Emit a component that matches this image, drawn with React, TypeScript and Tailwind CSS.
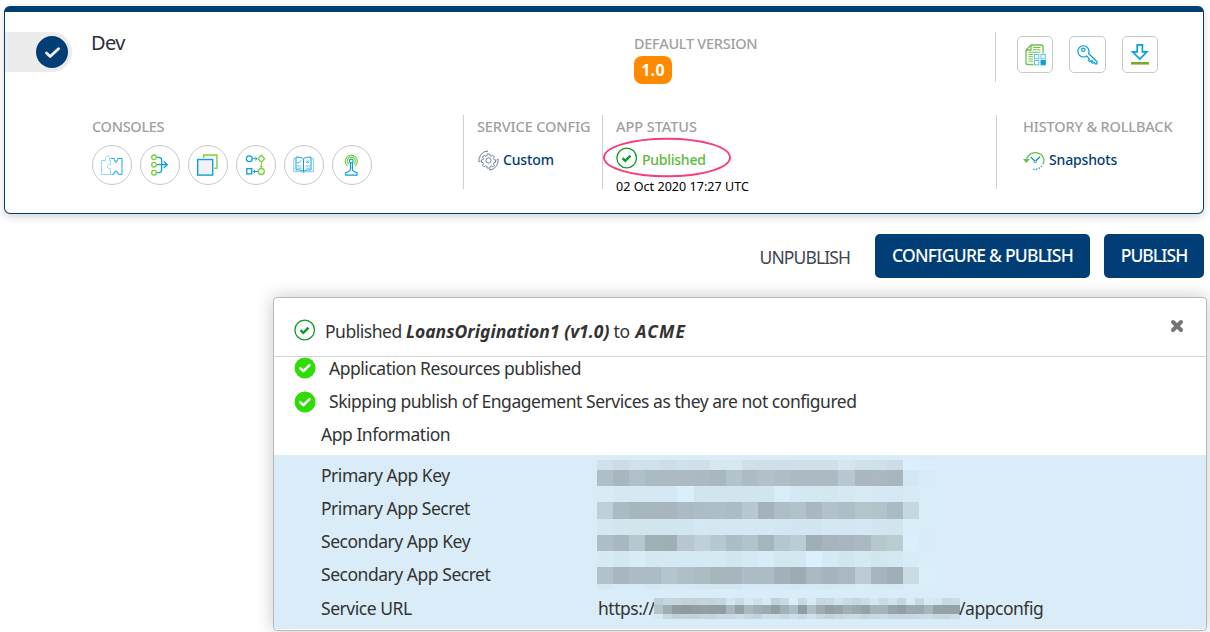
import type { ReactNode } from "react";

const BLUE = "#0aa0dc";
const GREEN = "#7ad03a";

/* ---------- icons ---------- */

function PuzzleIcon() {
  return (
    <svg className="block size-full" viewBox="0 0 40 40" fill="none" strokeWidth="1">
      <path stroke="#93d8f8" d="M9.500 15.500H13.500V13.500c0-3.400 4-3.400 4 0V15.500H18.500V19.500c-4-1-4 5 0 4V29.500H9.500Z" />
      <path stroke="#1ea8e0" d="M18.500 13.500H22.300c-.6 3.800 4 3.800 3.400 0H30V29.300H26.200c.4-3.800-4.800-3.800-4.400 0H19.500" />
      <circle cx="24" cy="16.500" r="1.200" stroke="#5cc0ea" strokeWidth=".7" />
      <circle cx="24" cy="27" r="1.200" stroke="#5cc0ea" strokeWidth=".7" />
    </svg>
  );
}

function MergeIcon() {
  return (
    <svg className="block size-full" viewBox="0 0 40 40" fill="none" strokeWidth="1.3">
      <g stroke={GREEN}>
        <circle cx="14" cy="12.300" r="2.300" />
        <circle cx="14" cy="19.700" r="2.300" />
        <circle cx="14" cy="27.700" r="2.300" />
      </g>
      <path stroke={BLUE} d="M17 12.300h1.500c2.500 0 3.200 1 3.200 3V24.500c0 2-.9 3.200-3.200 3.200H17M17 19.700H27.500M23.800 16.600l3.500 3.100-3.500 3.100" />
    </svg>
  );
}

function LayersIcon() {
  return (
    <svg className="block size-full" viewBox="0 0 40 40" fill="none" strokeWidth="1.400">
      <path stroke={GREEN} d="M15.800 13V10H28.900V23.300H26.200" />
      <rect x="9.700" y="14.500" width="15" height="15.600" fill="#f3f3f3" stroke={BLUE} />
    </svg>
  );
}

function WorkflowIcon() {
  return (
    <svg className="block size-full" viewBox="0 0 40 40" fill="none" strokeWidth="1.300">
      <g stroke={BLUE}>
        <circle cx="13.300" cy="13.700" r="2.900" />
        <rect x="10.800" y="23.700" width="5" height="5.200" />
        <path strokeWidth="1" d="M16.500 13.700h4.500M19.300 12.200l1.700 1.500-1.700 1.500M22 26.500h-4.800M19 25l-1.700 1.500L19 28" />
      </g>
      <g stroke={GREEN}>
        <path d="m25.300 10.300 3.300 3.400-3.300 3.400-3.300-3.400Z" />
        <circle cx="25.300" cy="26.500" r="3" />
        <path strokeWidth="1" d="M25.300 17.500v5M23.800 21l1.500 1.600 1.500-1.600" />
      </g>
    </svg>
  );
}

function BookIcon() {
  return (
    <svg className="block size-full" viewBox="0 0 40 40" fill="none" stroke={BLUE} strokeWidth="1">
      <path d="M19.500 14c-1.700-1.600-4-2-7.500-1.800v12.700c3.500-.2 5.800.2 7.500 1.800 1.700-1.600 4-2 7.500-1.800V12.200c-3.500-.2-5.800.2-7.500 1.800Z" />
      <path stroke="#6cc6ec" strokeWidth=".9" d="M11.500 13.700H9.800v13h8l1.700 1 1.700-1h8.200v-13h-1.900" />
      <path d="M19.500 14V27" />
      <path strokeWidth=".9" d="m13 16.800 1.400 1.400 2.900-2.900M22.300 15.500l2.400 2.500M24.700 15.500 22.300 18" />
      <path stroke="#4fb8e6" strokeWidth=".8" d="M13 21h4.500M13 23.200h4.500M21.500 21H26M21.500 23.200H26" />
    </svg>
  );
}

function TowerIcon() {
  return (
    <svg className="block size-full" viewBox="0 0 40 40" fill="none" strokeWidth="1.200">
      <g stroke={GREEN}>
        <path d="M16.800 19.200a4 4 0 1 1 5 0" />
        <path d="M15.500 21a6.100 6.100 0 1 1 7.600 0" />
      </g>
      <g stroke={BLUE}>
        <circle cx="19.300" cy="16" r="1.800" />
        <path d="M18.400 18v6.500c0 1.600-1.400 2-4.600 3.200V30.200h11.200V27.700c-3.200-1.200-4.600-1.600-4.600-3.200V18" />
      </g>
    </svg>
  );
}

function DocumentIcon() {
  return (
    <svg className="block size-full" viewBox="0 0 36 37" fill="none">
      <path stroke="#6cc24a" strokeWidth="1.300" d="M16.500 28.500H11a2 2 0 0 1-2-2V14l5-5h10a2 2 0 0 1 2 2v6.500M14 9v5H9" />
      <path stroke="#6cc24a" strokeWidth="1" d="M16 11.500h7.500M16 13.800h7.500M11.500 16.200h12M11.500 18.500h4.500M11.500 20.700h4.500M11.500 23h4.500M11.500 25.200h4.500" />
      <g stroke="#5cc0ea" fill="#fff">
        <rect x="17.500" y="18.500" width="4.300" height="4.300" />
        <rect x="24" y="18.500" width="4.300" height="4.300" />
        <rect x="17.500" y="24.500" width="4.300" height="4.300" />
        <rect x="24" y="24.500" width="4.300" height="4.300" stroke={BLUE} fill={BLUE} />
      </g>
    </svg>
  );
}

function KeyIcon() {
  return (
    <svg className="block size-full" viewBox="0 0 37 37" fill="none" stroke={BLUE} strokeWidth="1.200" strokeLinejoin="round">
      <path d="M19.600 17.500 28 25.800v2h-1.800l-1.300-1.600-1.400 1-.9-.9.9-1.400-1.400-.2-1.300 1-1.500-1.300 1.100-1.300-2.700-3.200A5.600 5.600 0 1 1 19.600 17.500Z" />
      <circle cx="14.300" cy="13.800" r="1.700" />
    </svg>
  );
}

function DownloadIcon() {
  return (
    <svg className="block size-full" viewBox="0 0 36 37" fill="none">
      <path stroke={BLUE} strokeWidth="1.700" d="M15.200 8.800h5.200v7.100h4.500L17.800 23 10.700 15.900h4.500Z" />
      <path stroke="#7bab2e" strokeWidth="2.600" d="M9 27.300h18" />
    </svg>
  );
}

function GearIcon() {
  return (
    <svg className="block h-[21px] w-[21px]" viewBox="0 0 21 21" fill="none" stroke="#5b7594" strokeWidth=".9">
      <circle cx="10.500" cy="10.500" r="2.600" />
      <path strokeLinejoin="round" d="M9.200 4h2.600l.4 1.800 1 .4 1.600-1 1.700 1.800-1 1.500.5 1.100 1.700.4v2.200l-1.700.4-.5 1.100 1 1.500-1.700 1.700-1.600-1-1 .5-.4 1.700H9.200l-.4-1.700-1-.5-1.600 1-1.700-1.700 1-1.500-.5-1.100-1.700-.4V10l1.700-.4.5-1.100-1-1.500 1.700-1.800 1.600 1 1-.4Z" />
      <path d="M.9 11.800A9.700 9.700 0 0 1 9.500.9M.9 11.800l1.300-.6M9.500.9l-.7 1.400M20.100 9.200a9.700 9.700 0 0 1-8.600 10.900M20.100 9.200l-1.300.6M11.500 20.100l.7-1.400" />
    </svg>
  );
}

function HistoryIcon() {
  return (
    <svg className="block h-[21px] w-[23px]" viewBox="0 0 23 21" fill="none">
      <path stroke="#62c244" strokeWidth="1.300" d="M3.300 10.500A9 9 0 0 1 21 9.500c.2 2-.3 3.600-1.200 5" />
      <path fill="#62c244" d="M0 9h6.800L3.400 13Z" />
      <path stroke="#0d8fae" strokeWidth="1.200" d="m7.800 7 4.400 4.500L17 6.800" />
      <circle cx="12.200" cy="11.400" r="1.200" stroke="#0d8fae" fill="#fff" strokeWidth=".9" />
      <path stroke={BLUE} strokeWidth="1.300" strokeDasharray="1.400 1.300" d="M18.800 15.800A9 9 0 0 1 9 19" />
    </svg>
  );
}

function OutlineCheck() {
  return (
    <svg className="block h-[22px] w-[22px] shrink-0" viewBox="0 0 22 22" fill="none" stroke="#0b9b24">
      <circle cx="10.700" cy="11" r="9.800" strokeWidth="1.300" />
      <path strokeWidth="2.400" d="m6.500 11.200 2.800 2.700 5.200-5.300" />
    </svg>
  );
}

function SolidCheck() {
  return (
    <svg className="block h-[22px] w-[22px] shrink-0" viewBox="0 0 22 22" fill="none">
      <circle cx="11" cy="11" r="10.500" fill="#2fdc08" />
      <path stroke="#fff" strokeWidth="2.600" strokeLinecap="round" strokeLinejoin="round" d="m6.300 11.200 3.100 2.900 6.100-6" />
    </svg>
  );
}

/* ---------- pieces ---------- */

function Label({ children, className = "" }: { children: ReactNode; className?: string }) {
  return <div className={`h-5 text-[14.5px] leading-5 font-medium whitespace-nowrap text-[#a0a0a0] ${className}`}>{children}</div>;
}

function RoundButton({ children }: { children: ReactNode }) {
  return <button className="size-10 rounded-full border border-[#c9c9c9] bg-white"><span className="-m-px block size-10">{children}</span></button>;
}

/* ---------- masked values ---------- */

const maskHeights = "grid-rows-[10px_16px_16px_17px_16px_16px_16px_17px_5px]";
const mask = [
  "d0e1eb cbdce6 d0e1eb d0e1eb cddee8 d0e1eb cfe0ea d6e9ef d5e9ef cfe0e9 cddfe9 cedfe9 cfe0ea cfe0e9 cfe0e9 d5e6f0 d0e1ea cfe0ea ccdde7 dceffb dceefa",
  "aebfca a8b6c0 afc0ca abbbc4 adbac4 aebac3 abb9c3 a9b8c0 b2c3cc acbbc6 b2c1c9 aebec6 abbac3 abbac3 abbac3 b7c8d2 aab7c0 abb8c1 a8b6c0 d4e7f5 d7ecf6",
  "d8ebf7 d5e8f4 d5e8f4 d5e8f4 d5e8f4 daeefb d2e5ef d1e5ee d2e5ef d2e5ef d1e5ef d9edf9 d5e8f3 d4e8f1 d3e7ef d5e8f3 d8ebf5 d5e8f3 d5e8f3 d7eaf6 d9edf8",
  "bed0d7 abbac4 a5b6bd a8b6bd a7b5be acbac3 adbdc6 adbeca abbcc4 b6c8d4 a3b2bc adbec7 b1c2ca a8b7c1 b1c2ce acbec7 b3c6cc b2c4cb abbbc4 c5d7e1 daeefa",
  "d4e7f2 d3e6ef d2e5ed d1e5ee d2e5ef d2e6f1 d5e8f3 d4e7f2 d4e7f2 d4e7f2 d4e8f3 d3e6f1 d2e5f0 d2e6f1 d4e7f2 d3e6f1 d4e7f2 d3e6f0 d1e5ef d9edf8 d9edf8",
  "adbec6 a8b7c0 b5c7cf a0b0b7 9fafb6 b7c6d1 bed0dc b6c8d0 abbdc5 b1c3cb a5b5bd b4c6ce bacdd4 9fafb7 a7b4be a8b6bf acb9c3 b4c8cd b9ccd2 dbeffb d8ebf6",
  "d6eaf5 d3e7f0 d8ecf8 d4e8f1 d5e8f3 d5e9f5 d5e9f5 d5e9f5 d1e6ee d5e9f5 d8ecf7 d3e7f1 d3e7f1 dbeffd d6eaf6 d2e6ef d5e9f4 d2e6ee d4e8f3 d8ecf8 d9edf8",
  "b1c2cd a8b7bf acbdc5 abbcc4 b4c5cd aebfc7 abbcc4 a6b6bd a7b6be acbdc5 acbdc5 a4b1bb 9dacb3 a9b9c2 a5b3be a9b8c1 bacbd6 a6b4bf a0afb7 c8dce1 dbeffb",
  "d4e8f3 d7ebf6 d7ebf6 d4e8f1 d6eaf4 d6eaf5 d3e8f0 d3e7ef d3e7ef d6eaf5 d6eaf5 d6eaf5 d4e8f3 d6eaf5 d4e8f3 d6eaf5 d8edf8 d6eaf5 d4e9f3 d8edf8 daeef9",
].map((row) => row.split(" "));

const urlMask = [
  "bfd0d9 c5d7df c5d6df c2d3dc c0d2da c4d5de c2d4dc c5d7e0 d2e6f0 c9dce4 d6eaf4 cfe2eb d5eaf5 bfd2da c8dbe4 d9eef9 c7d9e2 d7ebf5 c5d8e1 c8dbe4 cfe3ec c9dce5 c5d7e0 cbdee7 d2e7f0 c9dce5 d0e4ed c5d8e0 d7ebf6 c7dae2 d7ebf5 d4e8f2 c7dae2 cadde6",
  "b2c3ca a0adb4 929da2 909a9e 929ca2 949fa4 939da2 929ea3 a8b7bf 94a2a8 a9b9c0 a1afb6 9caab1 939fa5 a1b1b8 acbdc5 909ea3 aebfc7 9eabb2 94a0a6 97a4aa a1b0b7 9ba9b0 95a2a8 a5b5bc a5b4bb 98a5ac 939fa6 9daab1 9ba8af a7b6be 94a1a6 95a3a8 95a2a9",
  "d5e9f4 c6d9e1 bfd1da c1d3dc bfd1da c3d5dd c2d4dd c7dae3 c6d9e2 cbdfe8 c5d7e1 c1d4dd cadee7 ccdfe8 c5d8e1 ccdfe9 c7dae4 cee2eb c6d9e2 c0d2db c5d8e0 c8dbe4 c9dce5 c3d6df c7dae3 cadde6 c4d7e0 c4d7e0 c6d9e2 c8dbe4 cadde6 c5d8e0 c4d6df cbdee7",
].map((row) => row.split(" "));

const keyNames = ["Primary App Key", "Primary App Secret", "Secondary App Key", "Secondary App Secret", "Service URL"];

/* ---------- page ---------- */

export default function App() {
  return (
    <div className="flex h-[632px] w-[1210px] flex-col overflow-hidden bg-white pt-[6px] font-['Noto_Sans',sans-serif] text-[#333]">
      <section className="ml-1 flex h-[208px] w-[1200px] shrink-0 flex-col rounded-[6px] border border-t-[6px] border-[#003e75] bg-white shadow-[0_3px_8px_rgba(0,0,0,0.16)]">
        <div className="flex h-[98px] pt-5">
          <div className="flex h-10 w-[67px] items-center justify-end rounded-r-full bg-[#ececec] pr-1">
            <div className="flex size-8 items-center justify-center rounded-full bg-[#003e75]">
              <svg className="size-4" viewBox="0 0 16 16" fill="none" stroke="#f1f1f1" strokeWidth="2.800" strokeLinecap="round" strokeLinejoin="round">
                <path d="m2.500 9 3.700 3.500L14.500 4.800" />
              </svg>
            </div>
          </div>
          <h1 className="-mt-[3px] ml-[19px] w-[543px] text-[20px] leading-7 tracking-[-0.6px] text-[#2b2f38]">Dev</h1>
          <div className="w-[361px] pt-px">
            <Label className="tracking-[-0.28px]">DEFAULT VERSION</Label>
            <div className="mt-[3px] flex h-7 w-[38px] items-center justify-center rounded-[8px] bg-[#ff8a00] text-[16px] font-bold tracking-[0.3px] text-white">1.0</div>
          </div>
          <div className="flex h-[50px] border-l border-[#cfcfcf] pt-1 pl-[21px]">
            <button className="h-[37px] w-9 rounded-[5px] border border-[#c9c9c9]"><span className="-m-px block h-[37px] w-9"><DocumentIcon /></span></button>
            <button className="ml-4 h-[37px] w-[37px] rounded-[5px] border border-[#c9c9c9]"><span className="-m-px block size-[37px]"><KeyIcon /></span></button>
            <button className="ml-4 h-[37px] w-9 rounded-[5px] border border-[#c9c9c9]"><span className="-m-px block h-[37px] w-9"><DownloadIcon /></span></button>
          </div>
        </div>
        <div className="flex h-[79px] pt-[5px] pl-[87px]">
          <div className="w-[371px] pt-[1px]">
            <Label className="tracking-[-0.3px]">CONSOLES</Label>
            <div className="mt-[9px] flex gap-2">
              <RoundButton><PuzzleIcon /></RoundButton>
              <RoundButton><MergeIcon /></RoundButton>
              <RoundButton><LayersIcon /></RoundButton>
              <RoundButton><WorkflowIcon /></RoundButton>
              <RoundButton><BookIcon /></RoundButton>
              <RoundButton><TowerIcon /></RoundButton>
            </div>
          </div>
          <div className="h-[74px] w-[139px] border-l border-[#cfcfcf] pt-px pl-[13px]">
            <Label className="tracking-[-0.13px]">SERVICE CONFIG</Label>
            <div className="mt-[14px] flex h-[21px] items-center pl-px">
              <GearIcon />
              <span className="-mt-[2px] ml-1 text-[14px] leading-5 font-medium tracking-[-0.15px] text-[#003e75]">Custom</span>
            </div>
          </div>
          <div className="relative h-[74px] w-[394px] border-l border-[#cfcfcf] pt-px pl-[13px]">
            <Label className="tracking-[-0.05px]">APP STATUS</Label>
            <div className="mt-[11px] flex h-[22px] items-center">
              <OutlineCheck />
              <span className="mt-[3px] ml-1 text-[14px] leading-5 font-medium tracking-[-0.25px] text-[#5cba3c]">Published</span>
            </div>
            <div className="mt-[9px] text-[12.5px] leading-[18px] tracking-[0.05px] text-black">02 Oct 2020 17:27 UTC</div>
            <svg className="absolute top-[22px] left-0 h-[41px] w-[130px]" viewBox="0 0 130 41" fill="none">
              <ellipse cx="64" cy="20.500" rx="63" ry="18.800" stroke="#fa3c7a" strokeWidth="1.900" />
            </svg>
          </div>
          <div className="h-[74px] border-l border-[#cfcfcf] pt-px pl-[26px]">
            <Label className="tracking-[-0.15px]">HISTORY &amp; ROLLBACK</Label>
            <div className="mt-[14px] flex h-[21px] items-center">
              <HistoryIcon />
              <span className="-mt-[2px] ml-[3px] text-[14px] leading-5 font-medium tracking-[-0.15px] text-[#003e75]">Snapshots</span>
            </div>
          </div>
        </div>
      </section>

      <div className="mt-5 flex h-11 shrink-0 items-center justify-end pr-[6px]">
        <button className="mt-[1px] mr-[25px] text-[17.5px] leading-6 tracking-[-0.9px] whitespace-nowrap text-[#3d4650]">UNPUBLISH</button>
        <button className="h-11 w-[215px] rounded-[5px] bg-[#003e75] pb-[2px] text-[17.5px] leading-6 font-medium tracking-[-0.75px] whitespace-nowrap text-white">CONFIGURE &amp; PUBLISH</button>
        <button className="ml-[14px] h-11 w-[100px] rounded-[5px] bg-[#003e75] pb-[2px] text-[17.5px] leading-6 font-medium tracking-[-0.95px] text-white">PUBLISH</button>
      </div>

      <section className="mt-[19px] ml-[273px] flex h-[334px] w-[934px] shrink-0 flex-col rounded-[4px] border border-[#b9b9b9] bg-white pb-px text-[17.5px] tracking-[-0.47px] shadow-[0_0_18px_rgba(0,0,0,0.22)]">
        <header className="flex h-[59px] shrink-0 items-center border-b border-[#d4d4d4] pr-[22px] pl-5">
          <span className="mt-[6px]"><OutlineCheck /></span>
          <p className="mt-[7px] ml-[9px] flex-1 leading-6 whitespace-nowrap">
            Published <b className="tracking-[0.02px] italic">LoansOrigination1 (v1.0)</b> to <b className="ml-[2px] tracking-[1px] italic">ACME</b>
          </p>
          <button aria-label="Close" className="-mt-[3px]">
            <svg className="block size-[14px]" viewBox="0 0 14 14" stroke="#757575" strokeWidth="4" strokeLinecap="round">
              <path d="m3 3 8 8M11 3l-8 8" />
            </svg>
          </button>
        </header>
        <div className="flex h-[98px] shrink-0 flex-col pl-5">
          <div className="flex h-[23px] items-center">
            <span className="-mt-[1px]"><SolidCheck /></span>
            <span className="ml-[13px] leading-[23px]">Application Resources published</span>
          </div>
          <div className="mt-[10px] flex h-[23px] items-center">
            <span><SolidCheck /></span>
            <span className="ml-[13px] leading-[23px]">Skipping publish of Engagement Services as they are not configured</span>
          </div>
          <div className="mt-[10px] ml-[27px] h-[23px] leading-[23px]">App Information</div>
        </div>
        <div className="flex flex-1 bg-[#d9ecf7] pl-[47px]">
          <div className="w-[276px] pt-[3.5px]">
            {keyNames.map((name) => (
              <div key={name} className="h-[33.3px] leading-[33px]">{name}</div>
            ))}
          </div>
          <div className="pt-[5px]">
            <div className={`grid w-[338px] grid-cols-[repeat(21,minmax(0,1fr))] ${maskHeights}`}>
              {mask.flatMap((row, y) => row.map((c, x) => <i key={`${y}-${x}`} style={{ background: `#${c}` }} />))}
            </div>
            <div className="mt-[7px] flex h-6 items-center pl-px leading-6">
              <span className="w-14">https://</span>
              <div className="grid w-[306px] grid-cols-[repeat(34,9px)] grid-rows-[7px_9px_5px]">
                {urlMask.flatMap((row, y) => row.map((c, x) => <i key={`${y}-${x}`} style={{ background: `#${c}` }} />))}
              </div>
              <span className="-ml-px">/appconfig</span>
            </div>
          </div>
        </div>
      </section>
    </div>
  );
}
